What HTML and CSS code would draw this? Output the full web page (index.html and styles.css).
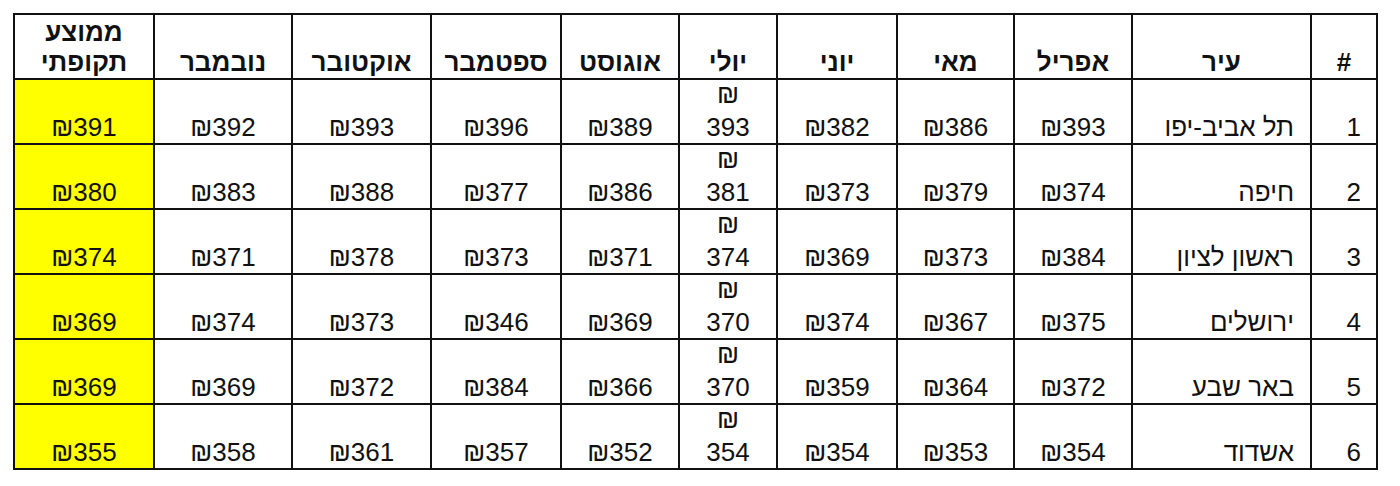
FILE: index.html
```html
<!DOCTYPE html>
<html lang="he" dir="rtl">
<head>
<meta charset="utf-8">
<title>מחירים לפי עיר</title>
<link rel="stylesheet" href="styles.css">
</head>
<body>
<table class="grid">
  <colgroup>
    <col class="c-num"><col class="c-city"><col class="c-apr"><col class="c-may"><col class="c-jun"><col class="c-jul"><col class="c-aug"><col class="c-sep"><col class="c-oct"><col class="c-nov"><col class="c-avg">
  </colgroup>
  <thead>
    <tr>
      <th>#</th><th>עיר</th><th>אפריל</th><th>מאי</th><th>יוני</th><th>יולי</th><th>אוגוסט</th><th>ספטמבר</th><th>אוקטובר</th><th>נובמבר</th><th>ממוצע<br>תקופתי</th>
    </tr>
  </thead>
  <tbody>
    <tr><td class="idx">1</td><td class="city">תל אביב-יפו</td><td>₪393</td><td>₪386</td><td>₪382</td><td class="jul"><span class="cur">₪</span>393</td><td>₪389</td><td>₪396</td><td>₪393</td><td>₪392</td><td class="avg">₪391</td></tr>
    <tr><td class="idx">2</td><td class="city">חיפה</td><td>₪374</td><td>₪379</td><td>₪373</td><td class="jul"><span class="cur">₪</span>381</td><td>₪386</td><td>₪377</td><td>₪388</td><td>₪383</td><td class="avg">₪380</td></tr>
    <tr><td class="idx">3</td><td class="city">ראשון לציון</td><td>₪384</td><td>₪373</td><td>₪369</td><td class="jul"><span class="cur">₪</span>374</td><td>₪371</td><td>₪373</td><td>₪378</td><td>₪371</td><td class="avg">₪374</td></tr>
    <tr><td class="idx">4</td><td class="city">ירושלים</td><td>₪375</td><td>₪367</td><td>₪374</td><td class="jul"><span class="cur">₪</span>370</td><td>₪369</td><td>₪346</td><td>₪373</td><td>₪374</td><td class="avg">₪369</td></tr>
    <tr><td class="idx">5</td><td class="city">באר שבע</td><td>₪372</td><td>₪364</td><td>₪359</td><td class="jul"><span class="cur">₪</span>370</td><td>₪366</td><td>₪384</td><td>₪372</td><td>₪369</td><td class="avg">₪369</td></tr>
    <tr><td class="idx">6</td><td class="city">אשדוד</td><td>₪354</td><td>₪353</td><td>₪354</td><td class="jul"><span class="cur">₪</span>354</td><td>₪352</td><td>₪357</td><td>₪361</td><td>₪358</td><td class="avg">₪355</td></tr>
  </tbody>
</table>
</body>
</html>
```
FILE: styles.css
```css
html, body {
  margin: 0;
  padding: 0;
  background: #ffffff;
}
body {
  padding: 13px 22px 0 0;
  font-family: "Liberation Sans", Arial, sans-serif;
  color: #111111;
}
.grid {
  border-collapse: collapse;
  table-layout: fixed;
  width: 1363px;
  font-size: 26px;
}
.c-num { width: 66px; }
.c-city { width: 179px; }
.c-apr { width: 118px; }
.c-may { width: 117px; }
.c-jun { width: 120px; }
.c-jul { width: 98px; }
.c-aug { width: 118px; }
.c-sep { width: 130px; }
.c-oct { width: 139px; }
.c-nov { width: 138px; }
.c-avg { width: 140px; }

.grid th, .grid td {
  border: 2px solid #111111;
  padding: 0 4px 1px;
  vertical-align: bottom;
  text-align: center;
  line-height: 30px;
  white-space: nowrap;
}
.grid th {
  height: 62px;
  font-weight: bold;
  letter-spacing: 0;
}
.grid td {
  height: 62px;
  font-weight: normal;
}
.grid td.idx {
  text-align: right;
  padding-right: 15px;
}
.grid td.city {
  text-align: right;
  padding-right: 16px;
}
.grid td.jul .cur {
  display: block;
  line-height: 20px;
  margin-bottom: 8px;
}
.grid td.avg {
  background: #ffff00;
}
```
